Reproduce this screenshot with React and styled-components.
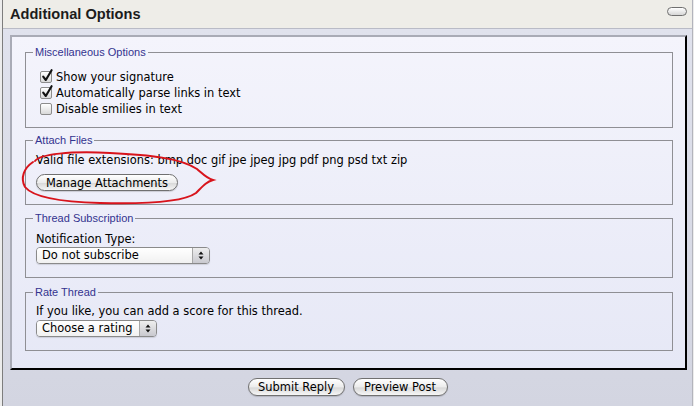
import React from 'react'
import styled, { createGlobalStyle } from 'styled-components'

const GlobalStyle = createGlobalStyle`
  html, body { margin: 0; padding: 0; }
  body {
    background: #ececec;
    font-family: "DejaVu Sans", Verdana, sans-serif;
    font-size: 11.45px;
    color: #000;
  }
`

const Root = styled.div`
  position: relative;
  width: 694px;
  height: 406px;
  overflow: hidden;
`

const Page = styled.div`
  box-sizing: border-box;
  width: 691px;
  height: 406px;
  margin-left: 2px;
  border-left: 1px solid #7d7d7d;
  border-right: 1px solid #b3b4bc;
  display: flex;
  flex-direction: column;
`

const Header = styled.div`
  height: 28px;
  border-bottom: 1px solid #b9bbc6;
  background: #eeede8;
  display: flex;
  justify-content: space-between;
  padding: 0 5px 0 7px;
`

const Title = styled.h2`
  margin: 0;
  font-family: "Liberation Sans", Arial, sans-serif;
  font-weight: bold;
  font-size: 14.6px;
  line-height: 28px;
  color: #1c1c1c;
`

const Collapse = styled.span`
  box-sizing: border-box;
  width: 20px;
  height: 9px;
  margin-top: 7px;
  border: 1px solid #6f6f6f;
  border-radius: 5px;
  background: linear-gradient(#ffffff, #d6d6d6);
`

const Body = styled.div`
  flex: 1;
  background: linear-gradient(#e0e2ed, #d3d5e1);
  padding: 6px 5px 0 7px;
`

const Panel = styled.div`
  border: 2px solid;
  border-color: #a9abb6 #000 #000 #a9abb6;
  background: linear-gradient(#f4f4fc, #e6e8f6);
  padding: 9px 12px 17px 13px;
`

const Fieldset = styled.fieldset`
  margin: 0 0 ${p => p.$gap ?? 7}px 0;
  border: 1px solid #8f8f94;
  padding: ${p => p.$top ?? 5}px 10px ${p => p.$bottom ?? 13}px 10px;
  min-inline-size: 0;
  &:last-child { margin-bottom: 0; }
`

const Legend = styled.legend`
  font-family: "Liberation Sans", Arial, sans-serif;
  font-size: 11px;
  line-height: 13px;
  color: #33338f;
  padding: 0 2px;
  margin-left: -3px;
`

const Line = styled.div`
  line-height: 16px;
  height: 16px;
  white-space: nowrap;
`

const CheckRow = styled.label`
  display: flex;
  align-items: center;
  height: 16px;
  padding-left: 4px;
  gap: 4px;
`

const Box = styled.span`
  position: relative;
  box-sizing: border-box;
  width: 12px;
  height: 12px;
  border: 1px solid #8c8c8c;
  border-radius: 2px;
  background: linear-gradient(#ffffff, #d9d9d9);
  flex: none;
  svg { position: absolute; left: 0; top: -3px; overflow: visible; }
`

const Button = styled.button`
  box-sizing: border-box;
  height: ${p => p.$h ?? 17}px;
  width: ${p => p.$w}px;
  margin-top: ${p => p.$mt ?? 0}px;
  padding: 0;
  border: 1px solid #707070;
  border-radius: 9px;
  background: linear-gradient(#ffffff 0%, #ececec 50%, #d9d9d9 55%, #f6f6f6 100%);
  box-shadow: 0 1px 1px rgba(0, 0, 0, 0.15);
  font-family: "DejaVu Sans", Verdana, sans-serif;
  font-size: 11.45px;
  color: #000;
  display: block;
`

const Select = styled.div`
  box-sizing: border-box;
  display: flex;
  width: ${p => p.$w}px;
  height: 17px;
  margin-top: ${p => p.$mt ?? 0}px;
  border: 1px solid #8a8a8a;
  border-radius: 4px;
  overflow: hidden;
  box-shadow: 0 1px 1px rgba(0, 0, 0, 0.12);
`

const SelectText = styled.span`
  flex: 1;
  padding-left: 5px;
  line-height: 15px;
  background: linear-gradient(#ffffff, #f1f1f1);
  white-space: nowrap;
`

const Stepper = styled.span`
  width: 16px;
  border-left: 1px solid #a7a7a7;
  background: linear-gradient(#eeeeee, #c9c9cf);
  display: flex;
  align-items: center;
  justify-content: center;
`

const Footer = styled.div`
  display: flex;
  justify-content: center;
  gap: 8px;
  padding-top: 8px;
  padding-right: 2px;
`

const Scribble = styled.svg`
  position: absolute;
  left: 0;
  top: 0;
  pointer-events: none;
`

const Check = () => (
  <svg width="12" height="14" viewBox="0 0 12 14">
    <path d="M2.2 7.6 L4.8 11 L10.6 1.2" fill="none" stroke="#111" strokeWidth="2.1" strokeLinecap="round" strokeLinejoin="round" />
  </svg>
)

const Checkbox = ({ checked, children }) => (
  <CheckRow>
    <Box>{checked && <Check />}</Box>
    <span>{children}</span>
  </CheckRow>
)

const Arrows = () => (
  <svg width="6" height="9" viewBox="0 0 6 9">
    <path d="M3 0.5 L5.5 3.5 L0.5 3.5 Z M3 8.5 L5.5 5.5 L0.5 5.5 Z" fill="#111" />
  </svg>
)

const Dropdown = ({ w, mt, children }) => (
  <Select $w={w} $mt={mt}>
    <SelectText>{children}</SelectText>
    <Stepper><Arrows /></Stepper>
  </Select>
)

export default function App() {
  return (
    <Root>
      <GlobalStyle />
      <Page>
        <Header>
          <Title>Additional Options</Title>
          <Collapse />
        </Header>
        <Body>
          <Panel>
            <Fieldset $top={10} $bottom={10} $gap={6}>
              <Legend>Miscellaneous Options</Legend>
              <Checkbox checked>Show your signature</Checkbox>
              <Checkbox checked>Automatically parse links in text</Checkbox>
              <Checkbox>Disable smilies in text</Checkbox>
            </Fieldset>
            <Fieldset $top={5} $bottom={13}>
              <Legend>Attach Files</Legend>
              <Line>Valid file extensions: bmp doc gif jpe jpeg jpg pdf png psd txt zip</Line>
              <Button $w={142} $mt={6}>Manage Attachments</Button>
            </Fieldset>
            <Fieldset $top={6} $bottom={13} $gap={8}>
              <Legend>Thread Subscription</Legend>
              <Line>Notification Type:</Line>
              <Dropdown w={174}>Do not subscribe</Dropdown>
            </Fieldset>
            <Fieldset $top={4} $bottom={13}>
              <Legend>Rate Thread</Legend>
              <Line>If you like, you can add a score for this thread.</Line>
              <Dropdown w={121} mt={1}>Choose a rating</Dropdown>
            </Fieldset>
          </Panel>
          <Footer>
            <Button $w={97} $h={18}>Submit Reply</Button>
            <Button $w={95} $h={18}>Preview Post</Button>
          </Footer>
        </Body>
      </Page>
      <Scribble width="694" height="406" viewBox="0 0 694 406">
        <path
          d="M35 161 C 40 154, 70 151, 110 153 C 150 155, 180 158, 197 169 C 203 174, 206 178, 213 180 C 206 182, 203 186, 196 193 C 182 203, 140 204, 100 203 C 62 202, 33 197, 25 187 C 20 178, 24 168, 33 162"
          fill="none"
          stroke="#d8141c"
          strokeWidth="2"
          strokeLinecap="round"
        />
      </Scribble>
    </Root>
  )
}
